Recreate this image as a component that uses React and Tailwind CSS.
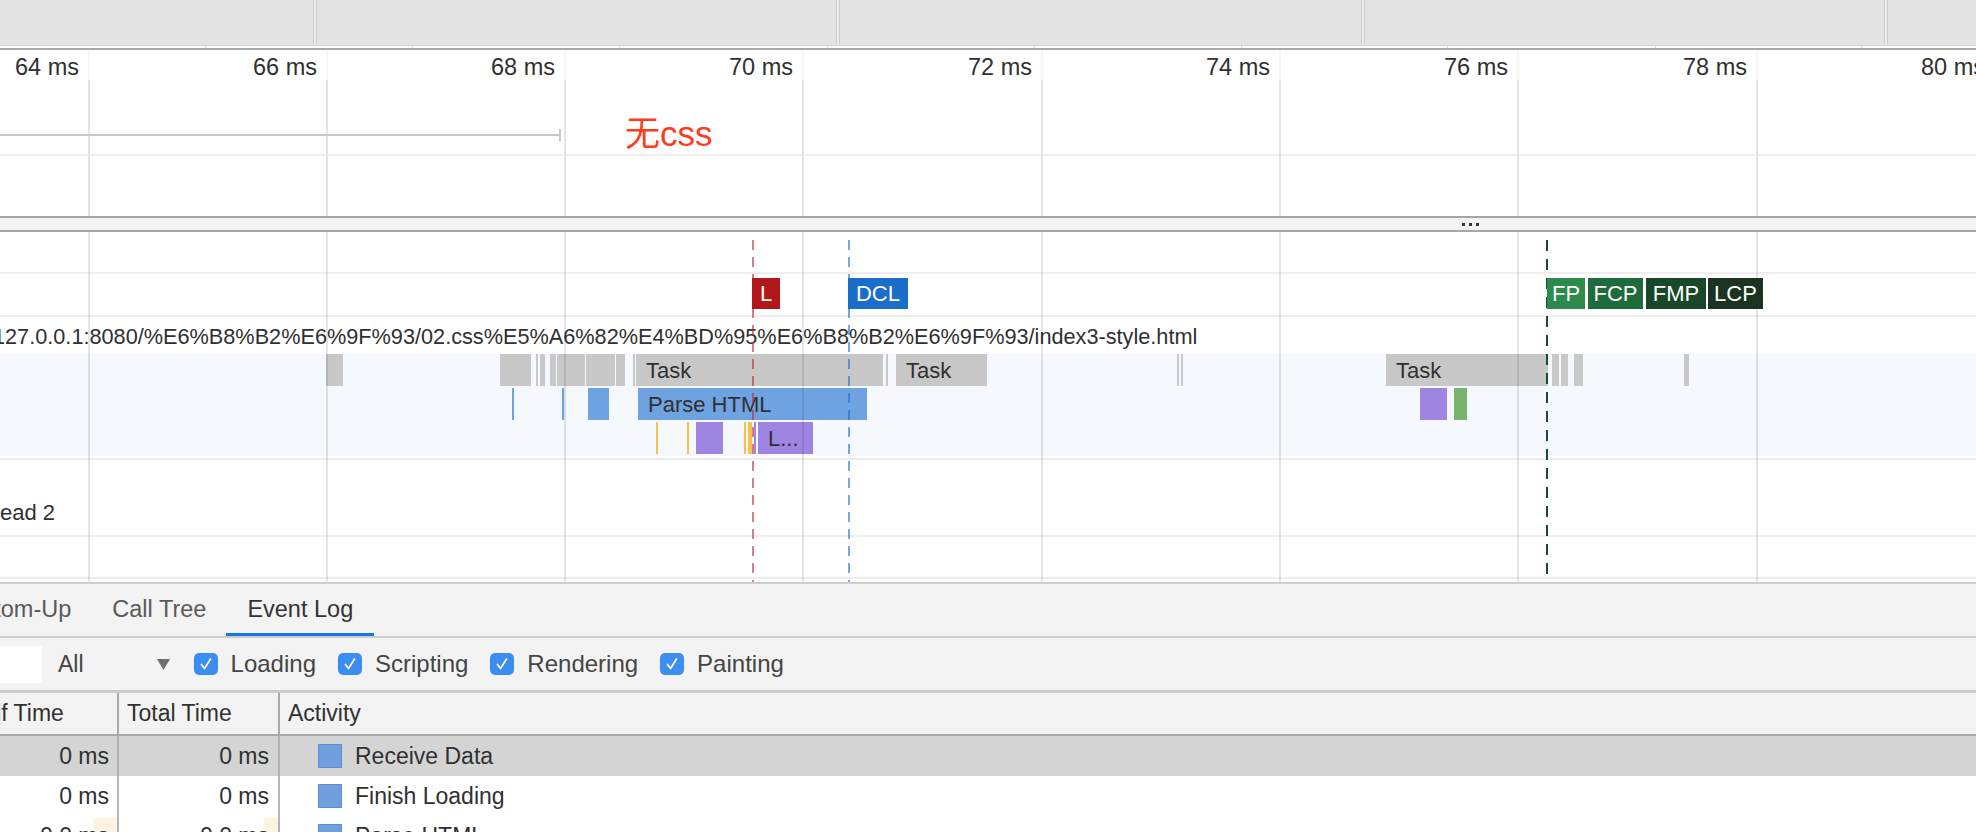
import React from "react";

// timeline grid (x of every 2 ms line)
const GRID = [89, 327, 565, 803, 1042, 1280, 1518, 1757];
const LABELS = [
  { x: 89, t: "64 ms" },
  { x: 327, t: "66 ms" },
  { x: 565, t: "68 ms" },
  { x: 803, t: "70 ms" },
  { x: 1042, t: "72 ms" },
  { x: 1280, t: "74 ms" },
  { x: 1518, t: "76 ms" },
  { x: 1757, t: "78 ms" },
  { x: 1995, t: "80 ms" },
];
const OVERVIEW_DIVIDERS = [315, 838, 1363, 1886];
const OVERVIEW_TICKS = [205, 412, 619, 827, 1034, 1241, 1447, 1655, 1861];

const GRAY = "#c8c8c8";
const BLUE = "#6fa2e0";
const PURPLE = "#9d85e1";
const GREEN = "#78b46b";
const YELLOW = "#f3c14e";

// flame chart entries: level, left, width, colour, label
const BARS = [
  [0, 326, 17, GRAY],
  [0, 500, 31, GRAY],
  [0, 536, 2, GRAY],
  [0, 540, 5, GRAY],
  [0, 550, 5.5, GRAY],
  [0, 556.5, 28.5, GRAY],
  [0, 586, 28.5, GRAY],
  [0, 616, 9, GRAY],
  [0, 633, 1.5, GRAY],
  [0, 636, 247, GRAY, "Task"],
  [0, 886, 1.5, GRAY],
  [0, 896, 91, GRAY, "Task"],
  [0, 1177, 2, GRAY],
  [0, 1181, 2, GRAY],
  [0, 1386, 162, GRAY, "Task"],
  [0, 1552, 7, GRAY],
  [0, 1561, 7, GRAY],
  [0, 1574, 9, GRAY],
  [0, 1684, 5, GRAY],
  [1, 512, 1.5, BLUE],
  [1, 562, 1.5, BLUE],
  [1, 588, 21, BLUE],
  [1, 638, 229, BLUE, "Parse HTML"],
  [1, 1420, 27, PURPLE],
  [1, 1454, 13, GREEN],
  [2, 656, 1.5, YELLOW],
  [2, 687, 1.5, YELLOW],
  [2, 696, 27, PURPLE],
  [2, 744, 1.5, YELLOW],
  [2, 748, 1.5, YELLOW],
  [2, 750, 1.5, YELLOW],
  [2, 754, 1.5, PURPLE],
  [2, 758, 55, PURPLE, "L..."],
];

const MARKERS = [
  { x: 752, w: 28, t: "L", c: "#b2171c" },
  { x: 848, w: 60, t: "DCL", c: "#1a6ec9" },
  { x: 1547, w: 38, t: "FP", c: "#2b8a4c" },
  { x: 1588, w: 55, t: "FCP", c: "#1e6b3b" },
  { x: 1646, w: 60, t: "FMP", c: "#19472a" },
  { x: 1708, w: 55, t: "LCP", c: "#1d3322" },
];

const GridLines = ({ className }) => (
  <div className="pointer-events-none absolute inset-0">
    {GRID.map((x) => (
      <div key={x} className={`absolute top-0 bottom-0 w-[2px] ${className}`} style={{ left: x - 1 }} />
    ))}
  </div>
);

const Check = () => (
  <span className="flex h-[22px] w-[24px] items-center justify-center rounded-[5px] bg-[#3b8ef0]">
    <svg width="14" height="14" viewBox="0 0 14 14" fill="none">
      <path d="M2.5 7.5 L5.5 11.5 L11.5 2" stroke="white" strokeWidth="1.8" strokeLinecap="round" strokeLinejoin="round" />
    </svg>
  </span>
);

const Row = ({ self, total, name, bg = "bg-white", heat }) => (
  <div className={`grid h-[40px] grid-cols-[119px_161px_1fr] ${bg}`}>
    <div className="relative flex items-center justify-end border-r-2 border-[#b4b4b4] pr-[8px]">
      {heat && <div className="absolute top-[2px] bottom-0 right-0 w-[23px] bg-[#fcf3e0]" />}
      <span className="relative">{self}</span>
    </div>
    <div className="relative flex items-center justify-end border-r-2 border-[#b4b4b4] pr-[9px]">
      {heat && <div className="absolute top-[2px] bottom-0 right-0 w-[14px] bg-[#fcf3e0]" />}
      <span className="relative">{total}</span>
    </div>
    <div className="flex items-center pl-[38px]">
      <span className="h-[24px] w-[24px] border border-[#5f8fd2] bg-[#6fa0dd]" />
      <span className="ml-[13px]">{name}</span>
    </div>
  </div>
);

export default function App() {
  return (
    <div className="h-[832px] w-[1976px] overflow-hidden bg-white font-['Liberation_Sans',Arial,sans-serif] text-[#303030]">
      {/* overview strip */}
      <div className="relative h-[46px] border-b border-[#d6d6d6] bg-[#e4e4e4]">
        {OVERVIEW_DIVIDERS.map((x) => (
          <div key={x} className="absolute top-0 bottom-0 w-[4px] border-x border-[#cdcdcd] bg-[#eeeeee]" style={{ left: x - 2 }} />
        ))}
      </div>
      <div className="relative h-[4px] border-b-2 border-[#a8a8a8]">
        {OVERVIEW_TICKS.map((x) => (
          <div key={x} className="absolute top-0 h-[2px] w-[1px] bg-[#d8d8d8]" style={{ left: x }} />
        ))}
      </div>

      {/* ruler + network */}
      <div className="relative h-[166px]">
        <GridLines className="bg-[#e4e4e4]" />
        <div className="relative z-10 h-[30px] bg-[rgba(255,255,255,0.65)] text-[23.5px] leading-[26px]">
          {LABELS.map((l) => (
            <span key={l.t} className="absolute top-[4px] whitespace-nowrap" style={{ right: 1976 - l.x + 10 }}>
              {l.t}
            </span>
          ))}
        </div>
        <div className="relative h-[74px]">
          <div className="absolute left-0 top-[54px] h-[2px] w-[560px] bg-[#c8c8c8]" />
          <div className="absolute left-[559px] top-[49px] h-[12px] w-[2px] bg-[#c8c8c8]" />
          <span className="absolute left-[625px] top-[34px] whitespace-nowrap text-[35px] leading-[40px] text-[#fc3c1e] font-['Liberation_Sans','Noto_Sans_CJK_SC',sans-serif]">
            无css
          </span>
        </div>
        <div className="h-[2px] bg-[#efefef]" />
      </div>

      {/* resizer */}
      <div className="flex h-[16px] items-center border-y-2 border-[#a6a6a6] bg-[#f3f3f3] pl-[1462px]">
        <div className="flex gap-[4px]">
          <span className="h-[3px] w-[3px] bg-[#333]" />
          <span className="h-[3px] w-[3px] bg-[#333]" />
          <span className="h-[3px] w-[3px] bg-[#333]" />
        </div>
      </div>

      {/* tracks */}
      <div className="relative h-[350px] text-[22px]">
        <div className="h-[42px] border-b-2 border-[#eeeeee]" />
        <div className="relative h-[43px] border-b-2 border-[#eeeeee]">
          {MARKERS.map((m) => (
            <div
              key={m.t}
              className="absolute top-[4px] z-30 flex h-[31px] items-center justify-center text-[22px] text-white"
              style={{ left: m.x, width: m.w, background: m.c }}
            >
              {m.t}
            </div>
          ))}
        </div>
        <div className="flex h-[37px] items-center overflow-hidden whitespace-nowrap pt-[2px] text-[21.7px] leading-[25px]">
          <span className="ml-[-7px]">127.0.0.1:8080/%E6%B8%B2%E6%9F%93/02.css%E5%A6%82%E4%BD%95%E6%B8%B2%E6%9F%93/index3-style.html</span>
        </div>
        <div className="relative h-[102px] bg-[#f5f8fd]">
          {BARS.map(([lvl, x, w, c, label], i) => (
            <div
              key={i}
              className="absolute flex h-[32px] items-center overflow-hidden whitespace-nowrap leading-[25px]"
              style={{ left: x, width: w, top: lvl * 34, background: c, paddingLeft: label ? 10 : 0 }}
            >
              {label}
            </div>
          ))}
        </div>
        <div className="h-[4px] border-b-2 border-[#ececec]" />
        <div className="h-[77px] overflow-hidden whitespace-nowrap border-b-2 border-[#eeeeee] pt-[40px] leading-[25px]">
          <span className="ml-[-33px]">Thread 2</span>
        </div>
        <div className="h-[42px] border-b-2 border-[#eeeeee]" />

        <div className="absolute inset-0 z-20">
          <GridLines className="bg-[rgba(0,0,0,0.1)]" />
        </div>
        {/* marker dashes */}
        <div className="absolute top-[8px] bottom-0 left-[752px] z-20 w-[2px] bg-[repeating-linear-gradient(to_bottom,rgba(190,40,50,0.6)_0_10px,transparent_10px_17px)]" />
        <div className="absolute top-[8px] bottom-0 left-[848px] z-20 w-[2px] bg-[repeating-linear-gradient(to_bottom,rgba(30,110,210,0.6)_0_10px,transparent_10px_17px)]" />
        <div className="absolute top-[8px] bottom-0 left-[1546px] z-20 w-[2px] bg-[repeating-linear-gradient(to_bottom,#1b4a2c_0_11px,transparent_11px_19px)]" />
      </div>

      {/* bottom panel */}
      <div className="border-t-2 border-[#cfcfcf] bg-[#f3f3f3] text-[23px]">
        <div className="flex h-[54px] border-b-2 border-[#cccccc] whitespace-nowrap text-[23.5px]">
          <div className="flex items-center pr-[21px] text-[#5a5a5a]">
            <span className="ml-[-41px]">Bottom-Up</span>
          </div>
          <div className="flex items-center px-[20px] text-[#5a5a5a]">Call Tree</div>
          <div className="flex items-center border-b-[3px] border-[#1a73e8] px-[21px] pt-[3px] text-[#333]">Event Log</div>
        </div>
        <div className="flex h-[55px] items-center border-b-[3px] border-[#cccccc] text-[24px] text-[#444]">
          <div className="h-[37px] w-[42px] bg-white" />
          <span className="ml-[16px] text-[23px]">All</span>
          <svg className="ml-[73px]" width="13" height="11" viewBox="0 0 13 11">
            <polygon points="0,0 13,0 6.5,11" fill="#6e6e6e" />
          </svg>
          <div className="ml-[24px] flex items-center">
            {["Loading", "Scripting", "Rendering", "Painting"].map((t) => (
              <div key={t} className="mr-[22px] flex items-center">
                <Check />
                <span className="ml-[13px]">{t}</span>
              </div>
            ))}
          </div>
        </div>
        <div className="grid h-[43px] grid-cols-[119px_161px_1fr] border-b-2 border-[#aaaaaa] whitespace-nowrap">
          <div className="flex items-center overflow-hidden border-r-2 border-[#aaaaaa]">
            <span className="ml-[-32px]">Self Time</span>
          </div>
          <div className="flex items-center border-r-2 border-[#aaaaaa] pl-[8px]">Total Time</div>
          <div className="flex items-center pl-[8px]">Activity</div>
        </div>
        <Row self="0 ms" total="0 ms" name="Receive Data" bg="bg-[#d4d4d4]" />
        <Row self="0 ms" total="0 ms" name="Finish Loading" />
        <Row self="0.0 ms" total="0.0 ms" name="Parse HTML" heat />
      </div>
    </div>
  );
}
